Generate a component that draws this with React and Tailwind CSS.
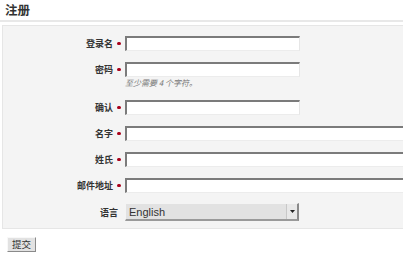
import React from 'react';

const FIELDS = [
  { label: '登录名', wide: false, type: 'text' },
  { label: '密码', wide: false, type: 'password', hint: '至少需要 4 个字符。' },
  { label: '确认', wide: false, type: 'password' },
  { label: '名字', wide: true, type: 'text' },
  { label: '姓氏', wide: true, type: 'text' },
  { label: '邮件地址', wide: true, type: 'text' },
];

const Field = ({ f }) => (
  <div className="flex flex-col">
    <div className="flex items-center h-[15px]">
      <label className="w-[110px] text-right text-[9px] font-bold text-[#333] leading-none">{f.label}</label>
      <span className="w-[12px] flex justify-center">
        <span className="block w-[3.5px] h-[3.5px] rounded-full bg-[#a8001a]" />
      </span>
      <input
        type={f.type}
        className={`${f.wide ? 'w-[300px]' : 'w-[175px]'} h-[15px] bg-white border-t-2 border-l-2 border-r border-b border-t-[#7b7b7b] border-l-[#7b7b7b] border-r-[#e6e6e6] border-b-[#ececec] outline-none`}
      />
    </div>
    {f.hint && (
      <div className="h-[23px] pl-[122px] pt-[1px] text-[8px] italic text-[#777] leading-[10px]">{f.hint}</div>
    )}
  </div>
);

export default function App() {
  return (
    <div className="w-[403px] h-[255px] overflow-hidden bg-white font-['Noto_Sans_CJK_SC',sans-serif]">
      <h1 className="h-[22px] pl-[5px] pt-[2px] text-[12.5px] font-bold leading-[16px] text-[#333] border-b-2 border-[#e8e8e8]">
        注册
      </h1>

      <div className="mt-[3px] ml-[2px] w-[460px] h-[204px] border border-[#e6e6e6] bg-[#f4f4f4] pt-[10px] flex flex-col">
        <div className="flex flex-col gap-[11px]">
          {FIELDS.map((f) => (
            <div key={f.label} className={f.hint ? '-mb-[11px]' : ''}>
              <Field f={f} />
            </div>
          ))}
          <div className="flex items-center h-[18px] -mt-[1px]">
            <label className="w-[115px] text-right text-[9px] font-bold text-[#333] leading-none">语言</label>
            <div className="ml-[7px] w-[174px] h-[18px] flex bg-[#e2e2e2] border-t border-l border-r-2 border-b-2 border-t-[#f4f4f4] border-l-[#f4f4f4] border-r-[#8a8a8a] border-b-[#9a9a9a]">
              <span className="flex-1 pl-[3px] text-[11px] leading-[16px] text-[#333] font-['Liberation_Sans',sans-serif]">English</span>
              <span className="w-[11px] flex items-center justify-center border-l border-[#c8c8c8] bg-[#e8e8e8]">
                <svg width="5" height="3" viewBox="0 0 5 3"><path d="M0 0h5L2.5 3z" fill="#222" /></svg>
              </span>
            </div>
          </div>
        </div>
      </div>

      <button className="mt-[8px] ml-[7px] w-[29px] h-[15px] bg-[#e2e2e2] border border-t-[#f8f8f8] border-l-[#f8f8f8] border-r-[#8a8a8a] border-b-[#8a8a8a] text-[9.5px] leading-[13px] text-[#333] flex items-center justify-center">
        提交
      </button>
    </div>
  );
}
